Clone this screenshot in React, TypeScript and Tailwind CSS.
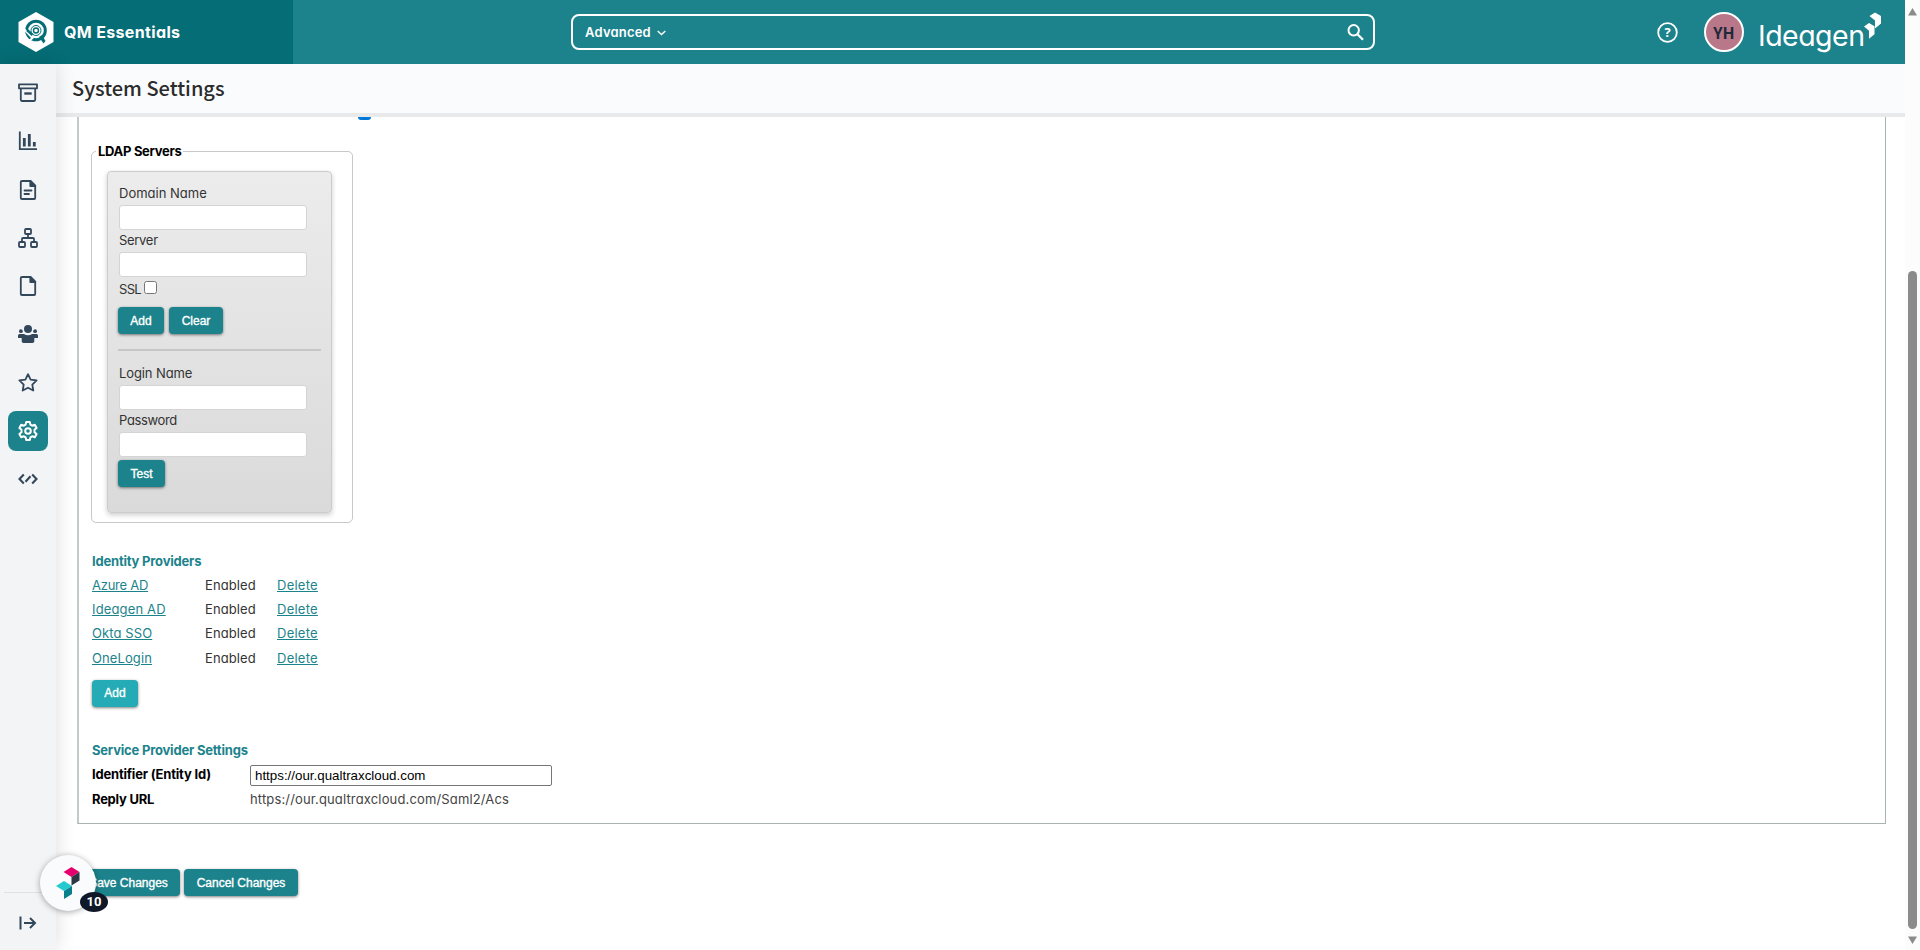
import React from "react";

const gx = "font-[Inter,sans-serif] [font-feature-settings:'cv11'] whitespace-nowrap";

function NavIcon({ name }: { name: string }) {
  const s = { fill: "none", stroke: "currentColor", strokeWidth: 1.8, strokeLinejoin: "round" as const, strokeLinecap: "round" as const };
  return (
    <svg width="20" height="20" viewBox="0 0 20 20">
      {name === "archive" && (
        <g {...s}>
          <path d="M1 1.3h18v4H1zM2.800 5.300V16.800q0 1.200 1.200 1.200h12q1.200 0 1.200-1.200V5.300" />
          <path d="M6.300 10.500h7.400" strokeWidth="2.400" strokeLinecap="butt" />
        </g>
      )}
      {name === "chart" && (
        <g fill="none" stroke="currentColor">
          <path d="M1.800 .5V18.200H19" strokeWidth="1.800" />
          <path d="M6.300 7v8.500M11.300 3v12.500M16.300 11v4.500" strokeWidth="2.800" />
        </g>
      )}
      {name === "doc" && (
        <g {...s}>
          <path d="M4 1h8.500l4.700 4.700V18q0 1-1 1H4q-1.200 0-1.200-1V2Q2.800 1 4 1zM6.500 10.500h7M6.500 14h4.500" />
          <path d="M12.300 1v5h5z" fill="currentColor" />
        </g>
      )}
      {name === "tree" && (
        <g {...s}>
          <rect x="7" y="1" width="6" height="5" rx="1" />
          <rect x="1" y="14" width="6" height="5" rx="1" />
          <rect x="13" y="14" width="6" height="5" rx="1" />
          <path d="M10 6v4M4 14v-3q0-1 1-1h10q1 0 1 1v3" />
        </g>
      )}
      {name === "page" && (
        <g {...s}>
          <path d="M4 1h8.500l4.700 4.700V18q0 1-1 1H4q-1.200 0-1.200-1V2Q2.800 1 4 1z" />
          <path d="M12.300 1v5h5z" fill="currentColor" />
        </g>
      )}
      {name === "people" && (
        <g fill="currentColor">
          <circle cx="10" cy="5" r="4" />
          <circle cx="2.900" cy="7.200" r="1.900" />
          <circle cx="17.100" cy="7.200" r="1.900" />
          <path d="M1.500 10H6q1.500 1.300 4 1.300T14 10h4.500q1.500 0 1.500 1.500V14h-3.700v3.200q0 1.800-1.800 1.800h-9q-1.800 0-1.800-1.800V14H0v-2.500Q0 10 1.500 10z" />
        </g>
      )}
      {name === "star" && (
        <path {...s} d="M10 1.200l2.600 5.400 6 .8-4.300 4.200 1 5.900L10 14.700l-5.300 2.800 1-5.900L1.400 7.400l6-.8z" />
      )}
      {name === "gear" && (
        <g {...s} strokeWidth="2">
          <path d="M8.200 1h3.600l.6 2.700 1.700 1 2.700-.9 1.800 3.100-2.100 1.900v2.400l2.100 1.900-1.800 3.100-2.700-.9-1.700 1-.6 2.700H8.200l-.6-2.700-1.700-1-2.700.9-1.800-3.100 2.100-1.900V8.800L1.400 6.900l1.800-3.100 2.700.9 1.700-1z" />
          <circle cx="10" cy="10" r="2.800" />
        </g>
      )}
      {name === "code" && (
        <path {...s} strokeWidth="2.100" strokeLinecap="butt" strokeLinejoin="miter" d="M5.800 5.500L1.500 10l4.300 4.500M14.200 5.500l4.300 4.500-4.300 4.500M7.500 12.700l5-5.400" />
      )}
    </svg>
  );
}

function Btn({ children, cls }: { children: React.ReactNode; cls: string }) {
  return (
    <button className={`flex h-[27px] shrink-0 items-center justify-center rounded-[4px] font-['Liberation_Sans',sans-serif] text-[12px] text-white [-webkit-text-stroke:0.35px_white] shadow-[0_1px_3px_rgba(0,0,0,0.5)] ${cls}`}>
      {children}
    </button>
  );
}

function Field({ label, cls }: { label: string; cls: string }) {
  return (
    <div className="h-[47px]">
      <div className={`h-[21px] text-[13px] leading-[19px] text-[#333] ${gx} ${cls}`}>{label}</div>
      <input className="block h-[25px] w-[188px] rounded-[3px] border border-[#d4d4d4] bg-white outline-none" />
    </div>
  );
}

const nav = ["archive", "chart", "doc", "tree", "page", "people", "star", "gear", "code"];
const providers = [
  { name: "Azure AD", cls: "tracking-[-0.25px]" },
  { name: "Ideagen AD", cls: "tracking-[0.15px]" },
  { name: "Okta SSO", cls: "tracking-[0.1px]" },
  { name: "OneLogin", cls: "tracking-[0.1px]" },
];

export default function App() {
  return (
    <div className="relative flex h-[950px] w-[1920px] overflow-hidden bg-white">
      <div className="flex w-[1905px] flex-col">
        <header className="flex h-16 shrink-0 bg-[#1c838c]">
          <div className="flex w-[293px] items-center bg-[#056d76] pl-[18px]">
            <svg width="36" height="40" viewBox="0 0 36 40">
              <path d="M18 0l17.500 10v20L18 40 .5 30V10z" fill="#fff" />
              <circle cx="18" cy="18.500" r="9.300" fill="none" stroke="#056d76" strokeWidth="3" />
              <path d="M21 25l4.500 6.500 2-2.500-3.500-6z" fill="#056d76" />
              <path d="M6.500 17.500L14.500 26l-4 3.500" fill="none" stroke="#fff" strokeWidth="2" />
              <circle cx="18" cy="18.500" r="5" fill="none" stroke="#056d76" strokeWidth="1" />
              <circle cx="18" cy="18.500" r="2.500" fill="none" stroke="#056d76" strokeWidth="1.400" />
              <path d="M14.500 23l-5.500-5" stroke="#056d76" strokeWidth="2.500" />
            </svg>
            <span className={`ml-[10px] text-[16px] font-bold tracking-[0.35px] text-white ${gx}`}>QM Essentials</span>
          </div>
          <div className="flex flex-1 items-center">
            <div className="ml-[278px] flex h-9 w-[804px] items-center rounded-lg border-2 border-white pl-[12px] pr-[9px]">
              <span className={`mt-px text-[13px] font-semibold tracking-[0.2px] text-white ${gx}`}>Advanced</span>
              <svg className="ml-[6px] mt-px" width="9" height="6" viewBox="0 0 9 6"><path d="M.7 1l3.800 3.600L8.300 1" fill="none" stroke="#fff" strokeWidth="1.400" /></svg>
              <svg className="ml-auto" width="17" height="17" viewBox="0 0 17 17"><circle cx="6.700" cy="6.300" r="5.200" fill="none" stroke="#fff" strokeWidth="2" /><path d="M10.500 10.200l5.500 5.500" stroke="#fff" strokeWidth="2.300" /></svg>
            </div>
            <svg className="ml-[282px]" width="21" height="21" viewBox="0 0 21 21">
              <circle cx="10.500" cy="10.500" r="9.300" fill="none" stroke="#fff" strokeWidth="1.800" />
              <text x="10.500" y="15" textAnchor="middle" fill="#fff" fontFamily="Open Sans" fontSize="13" fontWeight="700">?</text>
            </svg>
            <div className="ml-[26px] flex size-10 items-center justify-center rounded-full border-2 border-white bg-[#b9788a] pb-px font-['Noto_Sans_CJK_SC',sans-serif] text-[16px] font-bold leading-[20px] text-[#1f2937]">YH</div>
            <svg className="ml-[15px]" width="124" height="44" viewBox="0 0 124 44">
              <text x="-1" y="35.500" fill="#fff" fontFamily="Inter" fontSize="28.500" fontWeight="400" textLength="107" style={{ fontFeatureSettings: "'cv11'" }}>Ideagen</text>
              <path d="M110.500 6l5.500-3.500 6 3.500v7.500l-6 5v-8zM105 16.500l5-3.500 5.500 3.300v8l-5.500 4.500v-8z" fill="#fff" />
            </svg>
          </div>
        </header>
        <div className="flex min-h-0 flex-1">
          <nav className="relative z-10 flex w-14 shrink-0 flex-col items-center bg-[#f3f4f6] pt-[9px] text-[#33475b] shadow-[0_0_20px_rgba(0,0,0,0.14)]">
            <div className="flex flex-col gap-[8.250px]">
              {nav.map((n) => (
                <div key={n} className={n === "gear" ? "flex size-10 items-center justify-center rounded-lg bg-[#1c838c] text-white" : "flex size-10 items-center justify-center"}>
                  <NavIcon name={n} />
                </div>
              ))}
            </div>
            <div className="mb-[20px] mt-auto flex w-12 flex-col items-center border-t border-[#dfe2e5] pt-[23px]">
              <svg width="18" height="14" viewBox="0 0 18 14"><path d="M1.500 .5v13M5 7h11M11 2l5 5-5 5" fill="none" stroke="currentColor" strokeWidth="2" /></svg>
            </div>
          </nav>
          <main className="flex flex-1 flex-col">
            <div className="flex h-[53px] shrink-0 items-center border-b-4 border-[#e8e9eb] bg-[#fafbfd] pb-px pl-4 font-['Noto_Sans_CJK_SC',sans-serif] text-[20px] font-medium leading-[30px] text-[#2b2b2b]">System Settings</div>
            <div className="ml-[21px] flex h-[707px] w-[1809px] shrink-0 flex-col border-b border-l-2 border-r border-b-[#a9b3b2] border-l-[#c3cac9] border-r-[#a9b3b2] pl-[13px]">
              <div className="ml-[266px] h-[3px] w-[13px] rounded-b-sm bg-[#0078d7]" />
              <fieldset className="-ml-px mt-[23px] h-[380px] w-[262px] rounded-[5px] border border-[#c8c8c8] pl-[15px]">
                <legend className={`-ml-[11px] h-[17px] px-[2px] text-[13px] font-bold leading-[16px] tracking-[-0.3px] text-black ${gx}`}>LDAP Servers</legend>
                <div className="mt-[11px] h-[342px] w-[225px] rounded-[4px] border border-[#ccc] bg-linear-to-b from-[#ececec] to-[#dadada] pl-[11px] pt-[12px] shadow-[0_2px_5px_rgba(0,0,0,0.2)]">
                  <Field label="Domain Name" cls="" />
                  <Field label="Server" cls="tracking-[-0.3px]" />
                  <div className="flex h-[29px] items-start">
                    <span className={`mt-px text-[13px] leading-[21px] tracking-[-0.7px] text-[#333] ${gx}`}>SSL</span>
                    <input type="checkbox" className="ml-[3px] mt-[3px] size-[13px]" />
                  </div>
                  <div className="-ml-px flex gap-[5px]">
                    <Btn cls="w-[46px] bg-[#1c838c]">Add</Btn>
                    <Btn cls="w-[54px] bg-[#1c838c]">Clear</Btn>
                  </div>
                  <div className="-ml-px mb-[13px] mt-[15px] h-[2px] w-[203px] bg-[#c6c6c6]" />
                  <Field label="Login Name" cls="tracking-[-0.1px]" />
                  <Field label="Password" cls="tracking-[-0.35px]" />
                  <div className="-ml-px mt-[2px] flex"><Btn cls="w-[47px] bg-[#1c838c]">Test</Btn></div>
                </div>
              </fieldset>
              <div className={`mt-[26px] h-[24px] text-[13px] font-bold leading-[24px] tracking-[-0.2px] text-[#1c838c] ${gx}`}>Identity Providers</div>
              {providers.map((p) => (
                <div key={p.name} className={`flex h-[24.200px] text-[13px] leading-[24px] text-[#1c838c] ${gx}`}>
                  <a className={`w-[113px] underline ${p.cls}`}>{p.name}</a>
                  <span className="w-[72px] tracking-[0.1px] text-[#333]">Enabled</span>
                  <a className="tracking-[0.25px] underline">Delete</a>
                </div>
              ))}
              <div className="mt-[10px] flex"><Btn cls="w-[46px] bg-[#24abb5]">Add</Btn></div>
              <div className={`mt-[31px] h-[25px] text-[13px] font-bold leading-[24px] tracking-[-0.2px] text-[#1c838c] ${gx}`}>Service Provider Settings</div>
              <div className={`flex h-[26px] items-center text-[13px] text-black ${gx}`}>
                <span className="w-[158px] pb-[2px] font-bold tracking-[-0.2px]">Identifier (Entity Id)</span>
                <input className="h-[21px] w-[302px] rounded-[2px] border border-[#767676] bg-white px-[4px] font-['Liberation_Sans',sans-serif] text-[13.333px]" defaultValue="https://our.qualtraxcloud.com" />
              </div>
              <div className={`flex h-[24px] items-center pb-[2px] text-[13px] ${gx}`}>
                <span className="w-[158px] font-bold tracking-[-0.25px] text-black">Reply URL</span>
                <span className="tracking-[0.15px] text-[#444]">https://our.qualtraxcloud.com/Saml2/Acs</span>
              </div>
            </div>
            <div className="ml-[21px] mt-[45px] flex gap-[4px]">
              <Btn cls="w-[103px] bg-[#1c838c]">Save Changes</Btn>
              <Btn cls="w-[114px] bg-[#1c838c]">Cancel Changes</Btn>
            </div>
          </main>
        </div>
      </div>
      <div className="flex w-[15px] flex-col items-center bg-[#fcfcfc] pt-[8px]">
        <svg width="9" height="8" viewBox="0 0 9 8"><path d="M4.500 0L9 7.500H0z" fill="#8b8b8b" /></svg>
        <div className="mt-[255px] h-[658px] w-[9px] rounded-full bg-[#8b8b8b]" />
        <svg className="mt-[7px]" width="9" height="8" viewBox="0 0 9 8"><path d="M0 .5h9L4.500 8z" fill="#8b8b8b" /></svg>
      </div>
      <div className="absolute left-[40px] top-[855px] z-20 flex size-14 items-center justify-center rounded-full bg-[#fafbfd] shadow-[0_1px_6px_rgba(0,0,0,0.35)]">
        <svg width="24" height="32" viewBox="0 0 24 32">
          <path d="M7.500 5L15.500 0l8 5-8 5z" fill="#e5006d" />
          <path d="M23.500 5v8.500l-8 5V10z" fill="#2b3743" />
          <path d="M0 19l8-5 8 5-8 5z" fill="#25c9d0" />
          <path d="M16 19v8l-8 5v-8z" fill="#07808b" />
        </svg>
      </div>
      <div className="absolute left-[80px] top-[892px] z-30 flex h-[20px] w-[28px] items-center justify-center rounded-[50%] bg-[#0f1729] font-[Roboto,sans-serif] text-[13px] font-bold text-white">10</div>
    </div>
  );
}
